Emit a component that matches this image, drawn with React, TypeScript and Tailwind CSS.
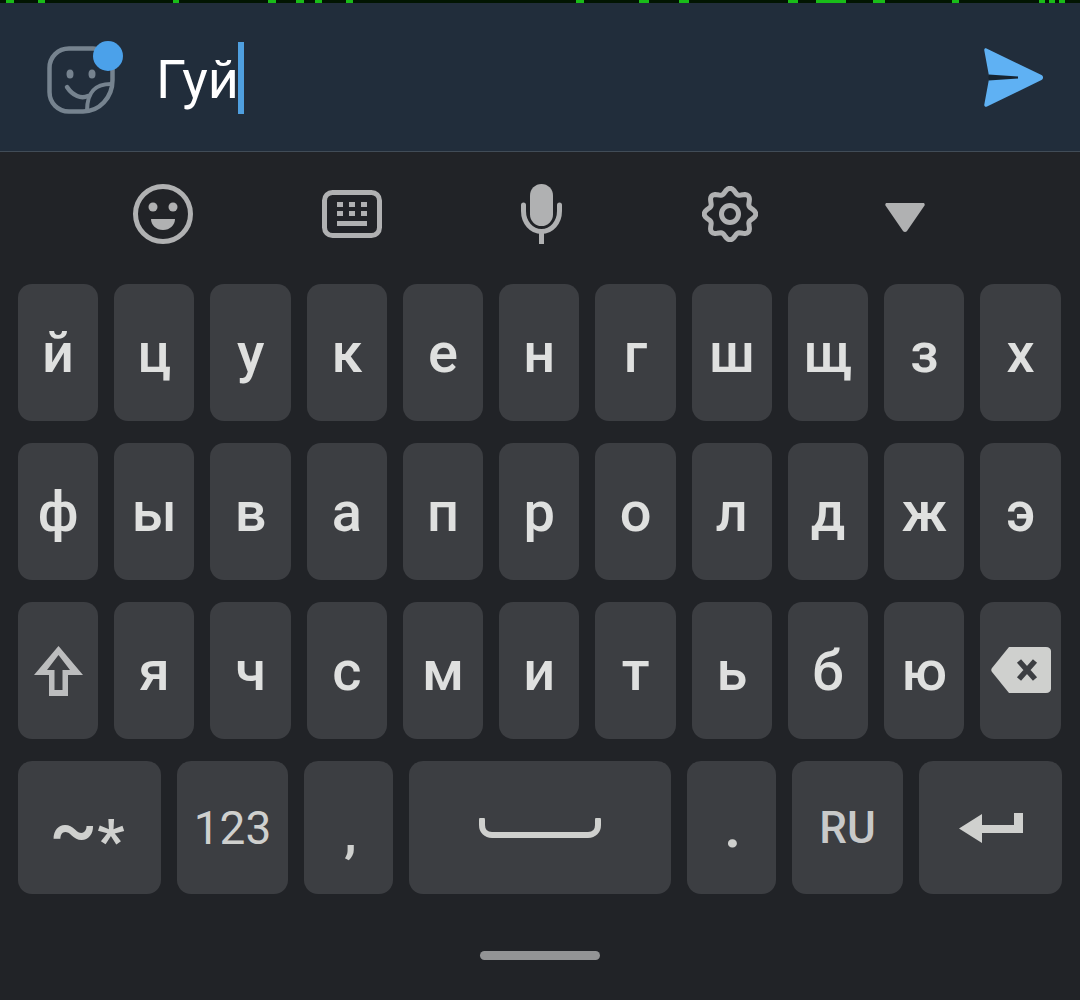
import React from "react";

const rows = [
  ["й", "ц", "у", "к", "е", "н", "г", "ш", "щ", "з", "х"],
  ["ф", "ы", "в", "а", "п", "р", "о", "л", "д", "ж", "э"],
];
const row3 = ["я", "ч", "с", "м", "и", "т", "ь", "б", "ю"];

// green bits of the app behind, cut off by the input bar
const greenBits = [
  [6, 8], [38, 7], [173, 6], [268, 8], [296, 8], [315, 7], [346, 7], [576, 8], [639, 10], [679, 10],
  [788, 10], [816, 30], [873, 12], [952, 7], [1039, 6], [1049, 6], [1059, 6],
];

// wavy outline of the settings icon
const gearPath = () => {
  const pts: string[] = [];
  for (let i = 0; i < 96; i++) {
    const t = (i / 96) * Math.PI * 2;
    const r = 23.2 + 2.6 * Math.cos(8 * t);
    pts.push(`${(28 + r * Math.sin(t)).toFixed(2)} ${(28 - r * Math.cos(t)).toFixed(2)}`);
  }
  return `M${pts.join("L")}Z`;
};

const Key = ({ children, className = "" }: { children?: React.ReactNode; className?: string }) => (
  <div className={`flex items-center justify-center rounded-[14px] bg-[#3c3e42] ${className}`}>{children}</div>
);

const LetterKey = ({ ch }: { ch: string }) => (
  <Key className="h-[137px] pt-[1px] text-[56px] font-medium leading-none text-[#dfe0df]">{ch}</Key>
);

const StickerIcon = () => (
  <div className="relative h-[68px] w-[68px]">
    <svg width="68" height="68" viewBox="0 0 68 68" fill="none">
      <path
        d="M22 2.500H46C57 2.500 65.500 11 65.500 22V34C65.500 52 52 65.500 36 65.500H22C11 65.500 2.500 57 2.500 46V22C2.500 11 11 2.500 22 2.500Z"
        stroke="#76838f"
        strokeWidth="4.500"
      />
      <ellipse cx="23" cy="28" rx="3.500" ry="4.500" fill="#76838f" />
      <ellipse cx="45" cy="28" rx="3.500" ry="4.500" fill="#76838f" />
      <path d="M20 41C26 50 34 53 41 50" stroke="#76838f" strokeWidth="4.500" strokeLinecap="round" />
      <path d="M64 38C50 38 40 44 40 65" stroke="#76838f" strokeWidth="4" />
    </svg>
    <div className="absolute left-[46px] top-[-5px] h-[30px] w-[30px] rounded-full bg-[#4ba1ea]" />
  </div>
);

const SendIcon = () => (
  <svg className="mt-[2px]" width="60" height="60" viewBox="0 0 60 60">
    <path
      d="M2.500 .5L57.500 27C59.500 28 59.500 31 57.500 32L3 58.500C1.500 59.300 0 58.300 .3 56.500L5 31V28L.3 2.500C0 .8 1 0 2.500 .5Z"
      fill="#5fb1f3"
    />
    <path d="M4.500 26.500L34 28.500V30.500L4.500 32.500Z" fill="#16232f" />
  </svg>
);

const ToolbarIcons = () => (
  <div className="flex h-[132px] items-center pb-[8px] pl-[132px]">
    <svg width="62" height="62" viewBox="0 0 62 62" fill="none">
      <circle cx="31" cy="31" r="27.500" stroke="#b0b1b2" strokeWidth="5" />
      <circle cx="21" cy="24" r="4.500" fill="#b0b1b2" />
      <circle cx="41" cy="24" r="4.500" fill="#b0b1b2" />
      <path d="M19 36h24c0 6-5 11-12 11s-12-5-12-11z" fill="#b0b1b2" />
    </svg>
    <svg className="ml-[128px]" width="60" height="48" viewBox="0 0 60 48" fill="none">
      <rect x="2.500" y="2.500" width="55" height="43" rx="8" stroke="#b0b1b2" strokeWidth="5" />
      <path
        d="M15 12h6v5h-6zM27 12h6v5h-6zM39 12h6v5h-6zM15 21h6v5h-6zM27 21h6v5h-6zM39 21h6v5h-6zM15 31h30v5H15z"
        fill="#b0b1b2"
      />
    </svg>
    <svg className="ml-[139px]" width="41" height="60" viewBox="0 0 41 60" fill="none">
      <rect x="9" y="0" width="23" height="42" rx="11.500" fill="#b0b1b2" />
      <path d="M2.500 21v6c0 11.500 8 20.500 18 20.500s18-9 18-20.500v-6" stroke="#b0b1b2" strokeWidth="5" strokeLinecap="round" />
      <path d="M20.500 47v13" stroke="#b0b1b2" strokeWidth="5" />
    </svg>
    <svg className="ml-[140px]" width="56" height="56" viewBox="0 0 56 56" fill="none">
      <path d={gearPath()} stroke="#b0b1b2" strokeWidth="5" strokeLinejoin="round" />
      <circle cx="28" cy="28" r="8.500" stroke="#b0b1b2" strokeWidth="5" />
    </svg>
    <svg className="ml-[127px] mt-[5px]" width="40" height="30" viewBox="0 0 40 30">
      <path d="M2 1h36c1.500 0 2 1 1.500 2.500L22 29c-1 1.300-3 1.300-4 0L.5 3.500C0 2 .5 1 2 1z" fill="#b0b1b2" />
    </svg>
  </div>
);

export default function App() {
  return (
    <div className="flex h-[1000px] w-[1080px] flex-col overflow-hidden bg-[#212327] font-['Roboto',sans-serif]">
      <div className="flex h-[3px] bg-[#021502]">
        {greenBits.map(([x, w], i) => (
          <div
            key={i}
            className="h-[3px] bg-[#19bd19]"
            style={{ marginLeft: i === 0 ? x : x - greenBits[i - 1][0] - greenBits[i - 1][1], width: w }}
          />
        ))}
      </div>

      {/* Input bar */}
      <div className="flex h-[149px] items-center border-b border-[#414c57] bg-[#212d3b] pl-[47px] pr-[36px]">
        <div className="mt-[6px]">
          <StickerIcon />
        </div>
        <div className="ml-[41px] flex flex-1 items-center text-[54px] leading-none text-white">
          <span className="pt-[6px]">Гуй</span>
          <span className="ml-[-1px] mt-[2px] h-[72px] w-[6px] bg-[#4f9fdf]" />
        </div>
        <SendIcon />
      </div>

      <ToolbarIcons />

      {/* Keys */}
      <div className="flex flex-col gap-[22px] pl-[18px] pr-[19.3px]">
        {rows.map((row, i) => (
          <div key={i} className="grid grid-cols-11 gap-x-[16px]">
            {row.map((ch) => (
              <LetterKey key={ch} ch={ch} />
            ))}
          </div>
        ))}
        <div className="grid grid-cols-11 gap-x-[16px]">
          <Key className="h-[137px]">
            <svg width="49" height="50" viewBox="0 0 49 50">
              <path
                fillRule="evenodd"
                d="M24.500 0L49 29H34V50H15V29H0ZM24.500 9L13 24H20.500V44H28.500V24H36Z"
                fill="#bcbdbe"
              />
            </svg>
          </Key>
          {row3.map((ch) => (
            <LetterKey key={ch} ch={ch} />
          ))}
          <Key className="h-[137px] pb-[2px]">
            <svg width="60" height="46" viewBox="0 0 60 46">
              <path d="M18 0h37c3 0 5 2 5 4v38c0 2-2 4-5 4H18L1 25c-1-1.500-1-2.500 0-4z" fill="#cfd0ce" />
              <path d="M28 14l16 18M44 14L28 32" stroke="#3c3e42" strokeWidth="5.500" />
            </svg>
          </Key>
        </div>
        <div className="flex w-[1044px] gap-x-[16px]">
          <Key className="h-[133px] w-[143px] pr-[5px] font-medium leading-none text-[#cfd0ce]">
            <span className="translate-y-[2px] text-[72px]">~</span>
            <span className="translate-y-[13px] text-[60px] font-bold">*</span>
          </Key>
          <Key className="h-[133px] w-[111px] text-[46px] leading-none text-[#cfd0ce]">123</Key>
          <Key className="h-[133px] w-[89px] pl-[4px] pt-[12px] text-[52px] font-bold leading-none text-[#cfd0ce]">,</Key>
          <Key className="h-[133px] w-[262px]">
            <svg width="122" height="20" viewBox="0 0 122 20" fill="none">
              <path d="M3 2v5c0 6 4 10 10 10h96c6 0 10-4 10-10V2" stroke="#cfd0ce" strokeWidth="6" strokeLinecap="round" />
            </svg>
          </Key>
          <Key className="h-[133px] w-[89px] pl-[2px] text-[56px] font-bold leading-none text-[#cfd0ce]">.</Key>
          <Key className="h-[133px] w-[111px] text-[44px] font-medium leading-none text-[#c8c9c9]">RU</Key>
          <Key className="h-[133px] w-[143px]">
            <svg width="64" height="30" viewBox="0 0 64 30">
              <path d="M23 1V12H55V0H64V20H23V30L0 15.500Z" fill="#cfd0ce" />
            </svg>
          </Key>
        </div>
      </div>

      {/* Gesture pill */}
      <div className="mt-[57px] flex justify-center">
        <div className="h-[9px] w-[120px] rounded-full bg-[#939495]" />
      </div>
    </div>
  );
}
